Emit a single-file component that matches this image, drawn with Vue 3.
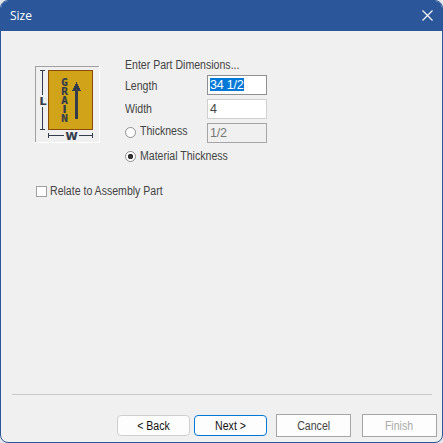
<script setup>
import { ref } from 'vue'

const length = ref('34 1/2')
const width = ref('4')
const thickness = ref('1/2')
const mode = ref('material')
const grain = [
  { c: 'G', y: 20 },
  { c: 'R', y: 29 },
  { c: 'A', y: 38 },
  { c: 'I', y: 47 },
  { c: 'N', y: 56 }
]
</script>

<template>
  <div class="window">
    <header class="titlebar">
      <span class="title">Size</span>
      <svg class="close" width="11" height="11" viewBox="0 0 11 11">
        <path d="M.5 .5 L10.5 10.5 M10.5 .5 L.5 10.5" stroke="#fff" stroke-width="1.1" fill="none" />
      </svg>
    </header>

    <main class="body">
      <section class="part">
        <svg class="preview" width="65" height="77" viewBox="0 0 65 77">
          <rect width="65" height="77" fill="#fff" />
          <path d="M0 0H64V1H1V76H0Z" fill="#a0a0a0" />
          <rect x="1" y="1" width="63" height="75" fill="#f0f0f0" />
          <rect x="13.5" y="4.5" width="44" height="59" fill="#d0a318" stroke="#8a4b08" />
          <g fill="#323c4b">
            <path d="M5 4h5v1H8v24H7V5H5zM7 41h1v22h2v1H5v-1h2z" />
            <path d="M13 67h1v2h15v1H14v2h-1zM57 67h1v5h-1v-2H44v-1h13z" />
            <path d="M41 16h1v2h1v2h1v2h1v2h1v1h-3v28h-3V25h-3v-1h1v-2h1v-2h1v-2h1z" />
          </g>
          <g class="glyphs">
            <text v-for="g in grain" :key="g.c" :class="{ wide: g.c === 'I' }" x="29.5" :y="g.y">{{ g.c }}</text>
            <text class="wide" x="8" y="39">L</text>
            <text class="wide" x="36.5" y="74">W</text>
          </g>
        </svg>

        <div class="form">
          <p class="line heading"><span class="t">Enter Part Dimensions...</span></p>
          <div class="line">
            <span class="t label low">Length</span>
            <div class="field focus"><span class="value selected">{{ length }}</span></div>
          </div>
          <div class="line">
            <span class="t label">Width</span>
            <div class="field"><span class="value">{{ width }}</span></div>
          </div>
          <div class="line">
            <i class="radio" :class="{ on: mode === 'custom' }"></i>
            <span class="t label option higher">Thickness</span>
            <div class="field disabled"><span class="value">{{ thickness }}</span></div>
          </div>
          <div class="line">
            <i class="radio" :class="{ on: mode === 'material' }"></i>
            <span class="t option high">Material Thickness</span>
          </div>
        </div>
      </section>

      <div class="relate">
        <i class="check"></i>
        <span class="t">Relate to Assembly Part</span>
      </div>
    </main>

    <footer class="footer">
      <button class="btn round"><span class="t">&lt; Back</span></button>
      <button class="btn round next"><span class="t">Next &gt;</span></button>
      <button class="btn cancel"><span class="t">Cancel</span></button>
      <button class="btn finish"><span class="t">Finish</span></button>
    </footer>
  </div>
</template>

<style>
body {
  background: #e4e6ea;
}
</style>

<style scoped>
.window {
  box-sizing: border-box;
  width: 443px;
  height: 443px;
  display: flex;
  flex-direction: column;
  border: 1px solid #2b579a;
  border-radius: 8px;
  overflow: hidden;
  background: #f0f0f0;
  color: #444;
  font: 12px/16px "Liberation Sans", Arial, sans-serif;
}
.titlebar {
  height: 30px;
  display: flex;
  align-items: center;
  justify-content: space-between;
  padding: 0 9px 0 9px;
  background: #2b579a;
  color: #fff;
}
.title {
  font: 12px/16px "Open Sans", sans-serif;
}
.close {
  margin-bottom: 2px;
}
.t {
  display: inline-block;
  white-space: nowrap;
  transform: scaleX(0.88);
  transform-origin: left center;
}
.body {
  flex: 1;
  padding: 26px 34px 0;
}
.part {
  display: flex;
  gap: 25px;
}
.preview {
  margin-top: 9px;
}
.glyphs {
  font: bold 11px "DejaVu Sans Mono", monospace;
  fill: #323c4b;
  stroke: #323c4b;
  stroke-width: 0.2px;
  text-anchor: middle;
}
.wide {
  font-family: "DejaVu Sans", sans-serif;
}
.line {
  display: flex;
  align-items: center;
  height: 24px;
  margin: 0;
}
.heading {
  height: 16px;
}
.label {
  width: 82px;
}
.low {
  padding-top: 2px;
}
.option {
  margin-left: 4px;
}
.high {
  padding-bottom: 3px;
}
.higher {
  padding-bottom: 4px;
}
.label.option {
  width: 67px;
}
.field {
  box-sizing: border-box;
  display: flex;
  width: 60px;
  height: 20px;
  border: 1px solid #d0d0d0;
  background: #fff;
  padding: 2px;
}
.value {
  height: 13px;
  line-height: 14px;
  font-size: 12.5px;
  letter-spacing: -0.2px;
  white-space: nowrap;
}
.focus {
  border-color: #8e8e93;
}
.selected {
  background: #0078d7;
  color: #fff;
}
.disabled {
  background: #f0f0f0;
  border-color: #a5a5a8;
  color: #777;
}
.radio {
  box-sizing: border-box;
  width: 11px;
  height: 11px;
  margin-bottom: 2px;
  border: 1px solid #8e8e8e;
  border-radius: 50%;
  background: #fff;
}
.radio.on {
  background: radial-gradient(circle, #333 2.4px, #fff 3px);
}
.relate {
  display: flex;
  align-items: center;
  gap: 3px;
  margin: 14px 0 0 1px;
}
.check {
  box-sizing: border-box;
  width: 11px;
  height: 11px;
  border: 1px solid #a0a0a0;
  background: #fff;
}
.footer {
  box-sizing: border-box;
  display: flex;
  align-items: flex-start;
  height: 48px;
  margin: 0 0 0 11px;
  padding: 20px 0 0 105px;
  background: linear-gradient(#c8c8c8, #c8c8c8) left top / 420px 1px no-repeat;
}
.btn {
  box-sizing: border-box;
  flex: none;
  width: 75px;
  height: 23px;
  padding: 0;
  border: 1px solid #a5a5a5;
  background: #fdfdfd;
  color: #444;
  font: inherit;
}
.btn .t {
  transform-origin: center;
}
.round {
  width: 73px;
  height: 21px;
  margin-top: 1px;
  border-color: #cfcfcf;
  border-radius: 4px;
  color: #111;
}
.next {
  margin-left: 4px;
  border-color: #0078d7;
}
.cancel {
  margin-left: 9px;
}
.finish {
  margin-left: 11px;
  color: #aaa;
}
</style>
